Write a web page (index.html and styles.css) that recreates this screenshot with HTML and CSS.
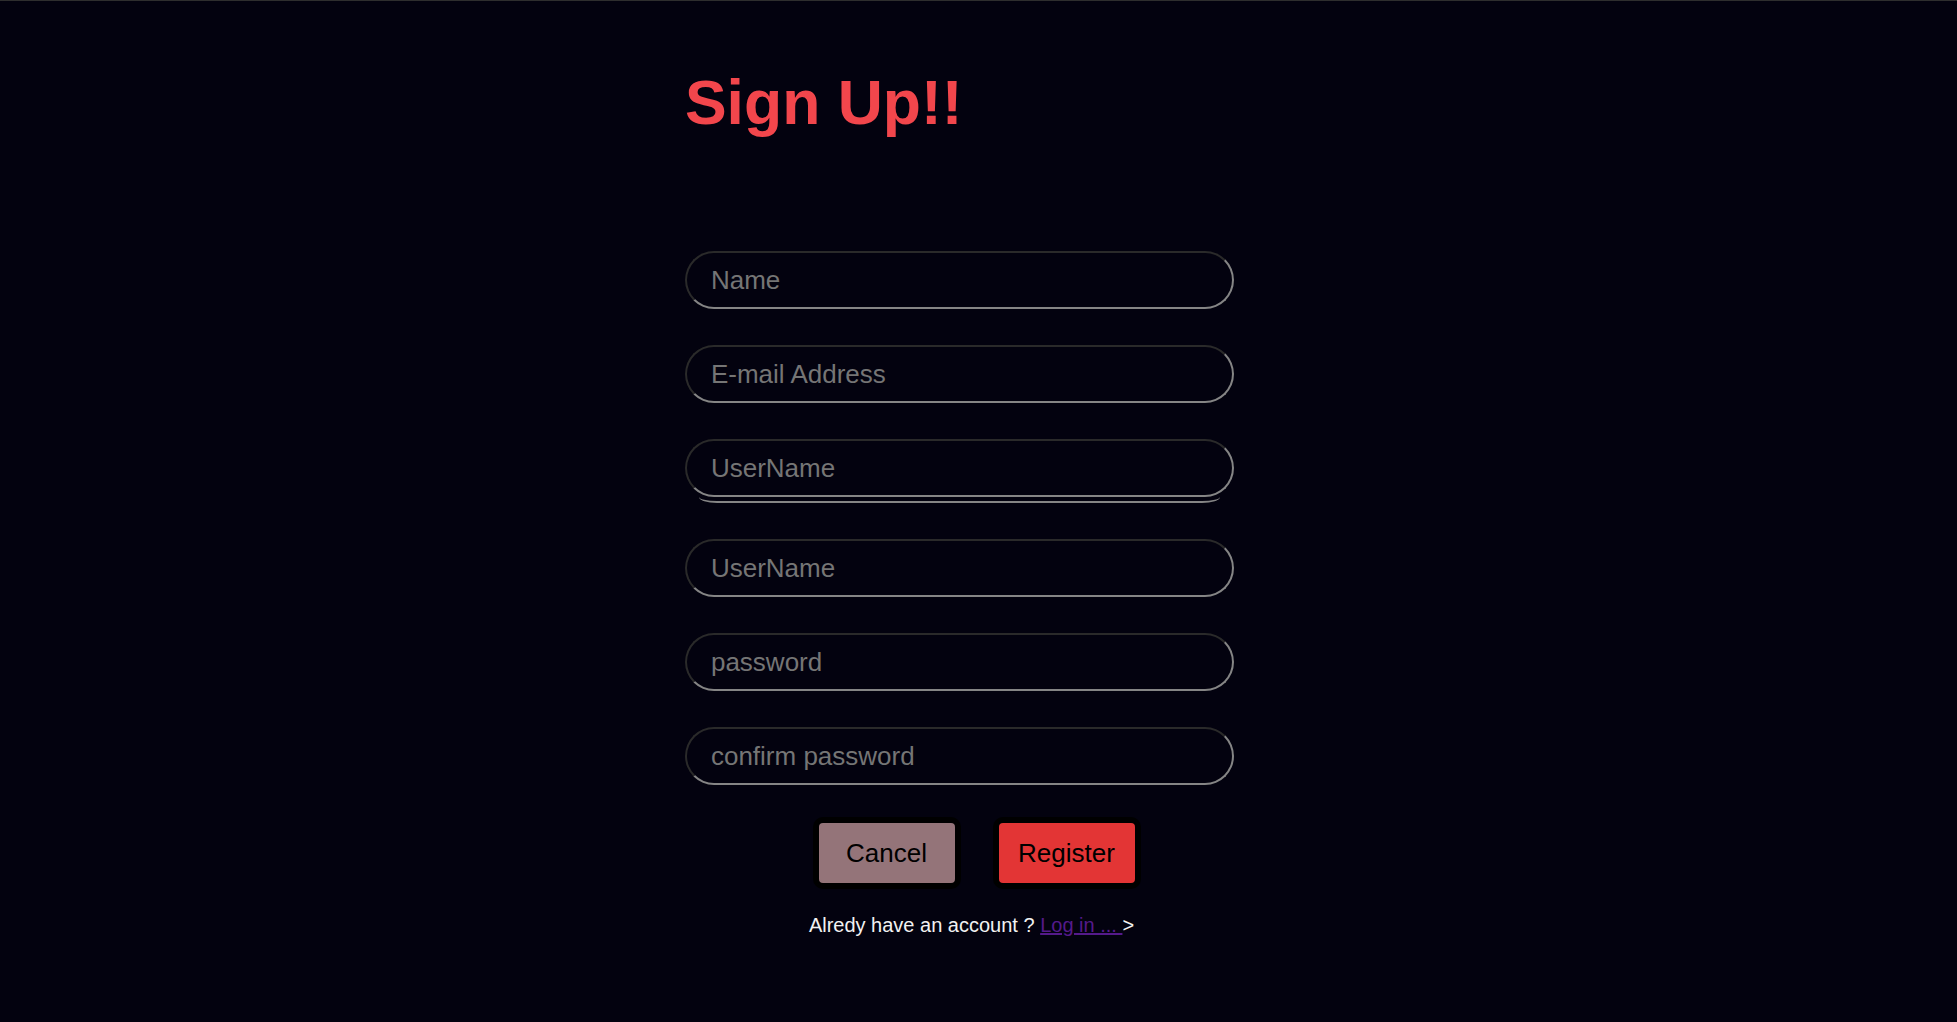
FILE: index.html
```html
<!DOCTYPE html>
<html lang="en">
<head>
<meta charset="utf-8">
<title>Sign Up</title>
<link rel="stylesheet" href="styles.css">
</head>
<body>
<main class="page">
  <section class="panel">
    <h1 class="title">Sign Up!!</h1>
    <form class="fields">
      <input class="field" type="text" placeholder="Name">
      <input class="field" type="email" placeholder="E-mail Address">
      <div class="field-group">
        <input class="field" type="text" placeholder="UserName">
        <div class="field-shadow"></div>
      </div>
      <input class="field" type="text" placeholder="UserName">
      <input class="field" type="password" placeholder="password">
      <input class="field" type="password" placeholder="confirm password">
    </form>
  </section>
  <div class="actions">
    <button class="btn btn-cancel" type="button">Cancel</button>
    <button class="btn btn-register" type="button">Register</button>
  </div>
  <p class="login">Alredy have an account ? <a class="login-link" href="#">Log in ... </a>&gt;</p>
</main>
</body>
</html>
```
FILE: styles.css
```css
html {
  background: #03020f;
}
body {
  margin: 0;
  min-height: 1021px;
  background: #03020f;
  border-top: 1px solid #2e2e2e;
  font-family: "Liberation Sans", Arial, sans-serif;
}
.page {
  padding-top: 65px;
}
.panel {
  padding-left: 35%;
}
.title {
  margin: 0;
  font-size: 62.5px;
  font-weight: bold;
  color: #f2464c;
  line-height: normal;
}
.fields {
  margin-top: 113px;
  display: flex;
  flex-direction: column;
  gap: 36px;
}
.field-group {
  display: flex;
  flex-direction: column;
}
.field {
  box-sizing: border-box;
  width: 549px;
  height: 58px;
  padding: 0 24px;
  border: 2px solid;
  border-color: #2a2a2a #858585 #858585 #2a2a2a;
  border-radius: 30px;
  background: transparent;
  color: #ddd;
  font-family: "Liberation Sans", Arial, sans-serif;
  font-size: 26px;
  outline: none;
}
.field::placeholder {
  color: #757575;
}
.field-shadow {
  box-sizing: border-box;
  width: 521px;
  height: 6px;
  margin-left: 14px;
  border-bottom: 2px solid #858585;
  border-radius: 0 0 18px 18px / 0 0 6px 6px;
}
.actions {
  margin-top: 32px;
  padding-right: 4px;
  display: flex;
  justify-content: center;
  gap: 32px;
}
.btn {
  box-sizing: border-box;
  width: 148px;
  height: 72px;
  border: 6px solid #000;
  border-radius: 10px;
  font-family: "Liberation Sans", Arial, sans-serif;
  font-size: 26px;
  color: #000;
  padding: 0;
}
.btn-cancel {
  background: #947479;
}
.btn-register {
  background: #e33535;
}
.login {
  margin: 25px 0 0;
  padding-right: 14px;
  text-align: center;
  font-size: 20px;
  color: #f2f2f2;
}
.login-link {
  color: #551a8b;
}
```
